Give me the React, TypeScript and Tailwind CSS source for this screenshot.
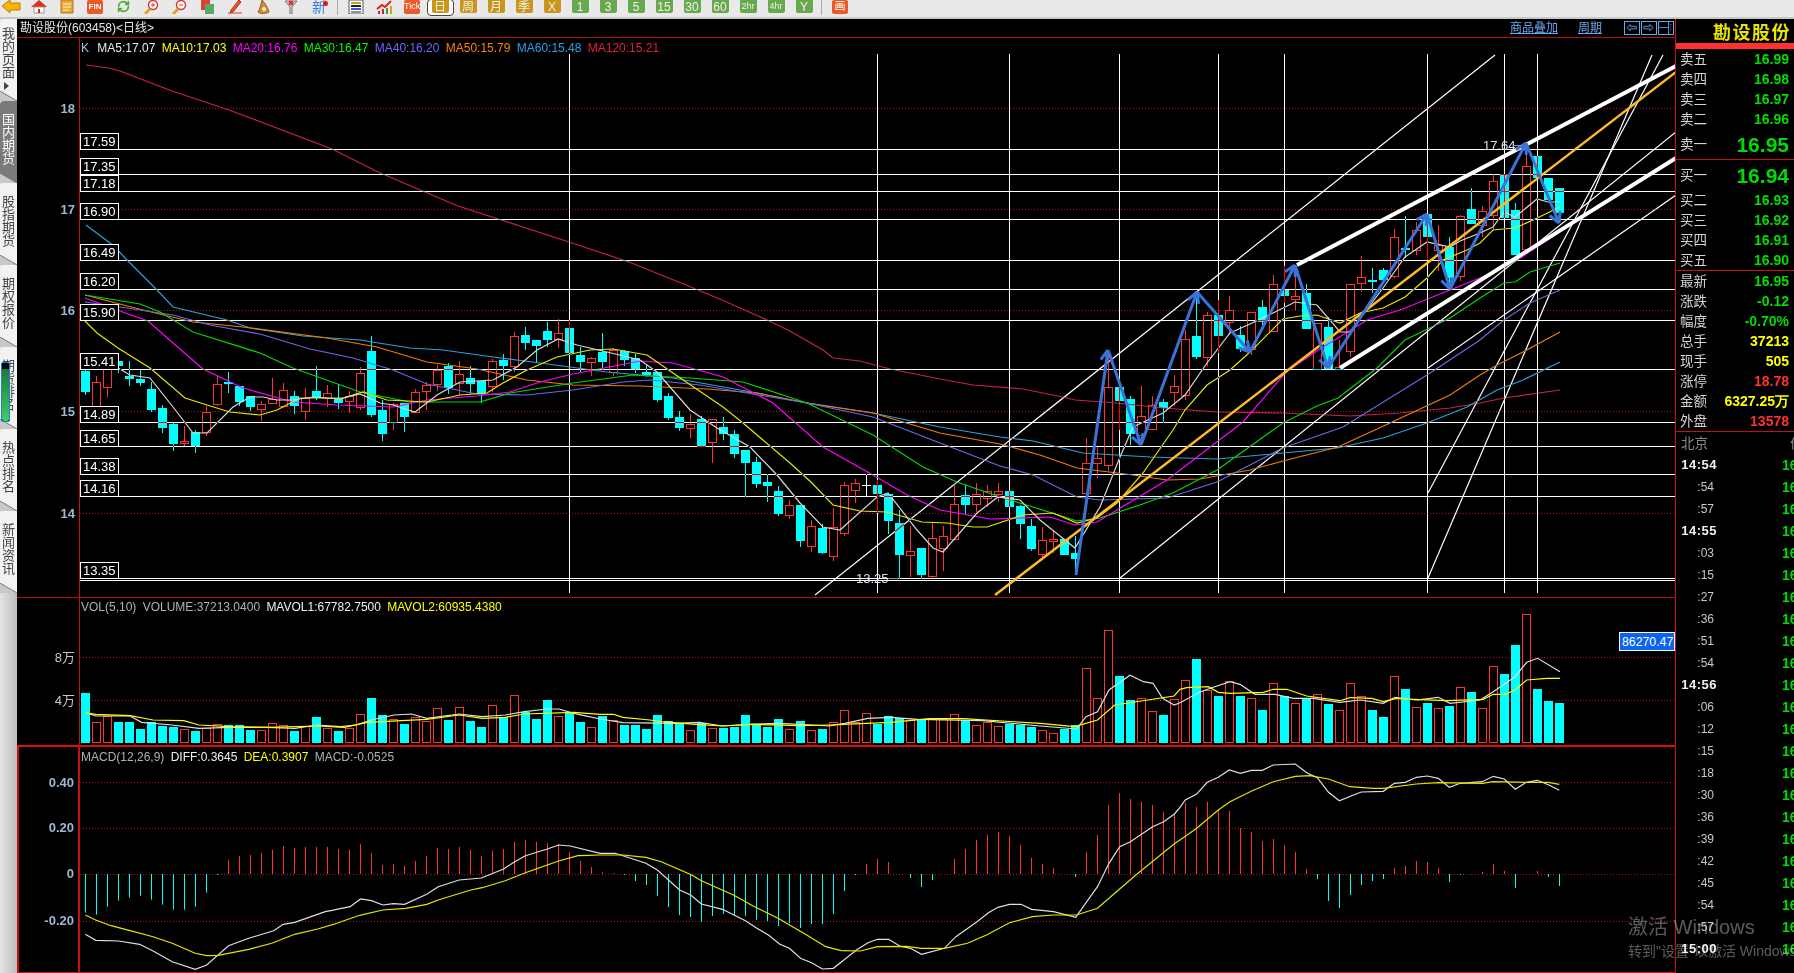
import type { ReactNode } from 'react'
import { RefreshCw } from 'lucide-react'

type Row = [string, number, number, number, number]

// Candle rows are [kind, bodyTop, bodyBottom, high, low] in thirds of a pixel from a section base
const lowerHalfA: Row[] = [
  ['c', 333, 396, 328, 404], ['r', 367, 437, 348, 437], ['r', 325, 380, 325, 410], ['c', 303, 318, 303, 338],
  ['c', 347, 357, 303, 378], ['c', 357, 369, 330, 378], ['c', 387, 450, 367, 455], ['c', 444, 504, 435, 519],
  ['c', 492, 552, 488, 573], ['r', 544, 550, 497, 557], ['c', 516, 558, 510, 579], ['r', 457, 515, 437, 527],
  ['r', 373, 431, 347, 437], ['c', 366, 371, 336, 400], ['c', 378, 426, 378, 438], ['c', 408, 441, 408, 453],
  ['r', 431, 448, 424, 483], ['r', 418, 430, 354, 430], ['r', 391, 439, 369, 443], ['c', 408, 437, 393, 461],
  ['r', 414, 454, 384, 480], ['c', 393, 414, 318, 420], ['r', 400, 413, 375, 440], ['c', 417, 429, 372, 447],
  ['r', 408, 422, 393, 459], ['r', 340, 442, 321, 450], ['c', 273, 465, 228, 470], ['c', 450, 521, 420, 543],
  ['r', 432, 487, 430, 510], ['c', 430, 470, 430, 516], ['r', 397, 457, 388, 457], ['r', 375, 394, 365, 450],
  ['r', 329, 371, 315, 392], ['c', 318, 385, 310, 402], ['r', 343, 369, 303, 405], ['c', 355, 371, 318, 402],
  ['c', 364, 403, 364, 428], ['r', 304, 379, 297, 396], ['c', 300, 318, 282, 360], ['r', 229, 317, 216, 336],
  ['c', 225, 249, 201, 270], ['c', 240, 258, 240, 306],
]

const lowerHalfB: Row[] = [
  ['c', 93, 120, 66, 140], ['r', 100, 118, 58, 145], ['c', 84, 159, 60, 160], ['c', 165, 186, 140, 218],
  ['r', 175, 185, 172, 228], ['c', 155, 186, 98, 210], ['r', 150, 215, 145, 228], ['c', 153, 179, 150, 198],
  ['c', 175, 207, 162, 220], ['c', 216, 224, 195, 232], ['c', 216, 300, 216, 306], ['c', 288, 354, 278, 360],
  ['c', 351, 384, 334, 393], ['r', 372, 384, 343, 414], ['c', 357, 440, 349, 440], ['r', 358, 425, 358, 489],
  ['c', 381, 402, 351, 420], ['c', 402, 462, 390, 474], ['c', 450, 489, 450, 590], ['c', 486, 552, 471, 564],
  ['c', 546, 558, 522, 606], ['c', 573, 642, 558, 648], ['r', 616, 644, 600, 657], ['c', 615, 723, 615, 741],
  ['r', 679, 738, 660, 756], ['c', 684, 759, 672, 762], ['r', 682, 767, 624, 783], ['r', 556, 698, 546, 708],
  ['r', 550, 569, 537, 609], ['w', 555, 555, 522, 588], ['c', 555, 582, 540, 640], ['c', 582, 663, 582, 702],
  ['c', 669, 765, 630, 836], ['r', 753, 765, 678, 831], ['c', 744, 825, 744, 836], ['r', 714, 828, 666, 834],
  ['r', 708, 744, 678, 813], ['r', 612, 717, 552, 720], ['c', 585, 615, 555, 642], ['r', 583, 613, 549, 636],
  ['r', 574, 594, 555, 621], ['r', 573, 582, 549, 606], ['c', 573, 621, 573, 621], ['c', 618, 672, 615, 717],
  ['c', 678, 747, 657, 753], ['r', 721, 762, 681, 777], ['r', 717, 722, 690, 760], ['c', 717, 765, 717, 765],
  ['c', 760, 777, 708, 825], ['r', 489, 578, 414, 578], ['r', 474, 490, 440, 534], ['r', 262, 496, 150, 513],
  ['c', 261, 303, 261, 390], ['c', 297, 402, 288, 435], ['r', 349, 405, 258, 435], ['r', 316, 386, 288, 386],
  ['c', 307, 325, 297, 369], ['r', 259, 275, 225, 318], ['r', 118, 285, 90, 300],
]

const upperRun: Row[] = [
  ['c', 918, 982, 800, 987], ['r', 856, 982, 846, 1008], ['c', 855, 918, 810, 970], ['r', 841, 876, 798, 915],
  ['c', 915, 957, 888, 965], ['r', 847, 957, 847, 975], ['c', 832, 877, 810, 900], ['r', 762, 902, 736, 902],
  ['c', 780, 797, 708, 818], ['r', 798, 806, 720, 840], ['c', 790, 897, 762, 897], ['r', 879, 1017, 879, 1017],
  ['c', 892, 1017, 862, 1017], ['r', 1010, 1017, 930, 1017], ['r', 763, 962, 763, 982], ['r', 742, 760, 678, 786],
  ['c', 750, 755, 714, 790], ['c', 720, 750, 714, 750], ['r', 622, 737, 597, 745], ['c', 655, 660, 558, 685],
  ['r', 601, 659, 575, 675], ['c', 552, 620, 552, 690], ['r', 646, 660, 585, 722], ['c', 650, 745, 622, 775],
  ['r', 559, 739, 555, 752], ['c', 537, 582, 474, 582], ['r', 544, 585, 528, 620], ['r', 454, 556, 432, 600],
]

const latest: Row[] = [
  ['c', 521, 654, 521, 654], ['c', 630, 765, 608, 765], ['r', 497, 748, 465, 750],
  ['c', 468, 535, 468, 535], ['c', 534, 600, 534, 600], ['c', 565, 640, 565, 640],
]

const fromBase = (base: number, rows: Row[]) =>
  rows.map(([kind, top, bottom, high, low]) => ({
    kind,
    top: Math.round(base + top / 3),
    bottom: Math.round(base + bottom / 3),
    high: Math.round(base + high / 3),
    low: Math.round(base + low / 3),
  }))

const candles = [
  ...fromBase(260, lowerHalfA),
  ...fromBase(300, lowerHalfB),
  ...fromBase(30, upperRun),
  ...fromBase(0, latest),
]

const slotX = (i: number) => 85.5 + 11 * i

const movingAverages = [
  { color: '#c8204c', points: '86,65 109,68 120,71 172,91 229,110 332,149 378,172 458,206 572,243 629,262 686,285 722,300 767,320 790,331 823,350 833,358 860,361 890,369 940,379 973,385 1023,389 1063,397 1075,400 1117,403 1163,408 1217,412 1283,413 1350,416 1400,413 1450,408 1480,403 1504,398 1560,390' },
  { color: '#2c9fd8', points: '86,225 114,246 127,260 157,290 173,307 227,320 250,328 303,336 360,340 410,348 443,350 493,357 540,363 607,372 673,378 757,393 807,403 873,413 940,427 1000,437 1033,441 1083,453 1150,457 1217,459 1283,453 1337,448 1383,438 1427,423 1467,407 1497,390 1523,380 1560,362' },
  { color: '#f07c00', points: '85,295 143,310 193,322 243,327 327,338 377,347 427,362 477,369 527,380 573,385 640,386 707,389 757,393 807,403 873,413 940,433 1000,444 1040,455 1077,468 1133,475 1167,480 1200,479 1250,470 1283,461 1338,447 1390,423 1450,395 1480,375 1497,365 1523,352 1560,332' },
  { color: '#6868e8', points: '85,302 127,308 173,315 210,325 260,334 310,349 353,358 393,370 427,384 477,394 527,395 573,390 623,382 650,380 700,385 747,393 807,403 873,417 940,443 1000,466 1033,475 1077,497 1100,500 1167,498 1217,482 1283,448 1343,427 1427,375 1480,340 1504,320 1530,303 1560,290' },
  { color: '#00d800', points: '85,295 140,304 160,312 193,332 260,353 293,368 360,392 410,402 480,402 510,393 573,383 633,375 690,378 743,382 807,403 873,435 923,467 957,482 1000,497 1033,507 1077,521 1100,518 1140,505 1173,493 1217,470 1283,423 1317,406 1338,398 1377,368 1405,340 1450,318 1480,298 1504,283 1515,282 1530,272 1560,263' },
  { color: '#ff00ff', points: '85,298 117,310 148,321 173,343 203,369 243,388 293,402 337,405 393,407 427,400 477,396 510,392 540,382 573,374 640,361 673,363 723,377 773,403 823,447 873,475 907,495 940,510 990,519 1050,517 1075,525 1097,522 1167,480 1243,422 1287,371 1320,349 1367,320 1400,310 1450,290 1480,278 1513,263 1540,245 1560,232' },
  { color: '#e6e600', points: '85,321 97,333 118,348 150,368 185,398 207,405 230,412 260,415 277,410 300,398 343,398 363,392 387,400 427,402 460,395 487,393 503,383 527,370 557,357 590,350 613,349 647,355 673,373 723,407 743,423 790,463 812,483 833,505 860,511 887,512 922,522 947,523 973,527 987,527 1023,515 1053,513 1077,523 1097,518 1117,503 1143,473 1173,430 1185,410 1207,385 1230,370 1250,352 1283,319 1300,316 1317,315 1340,323 1360,313 1383,308 1405,297 1427,278 1443,260 1467,250 1480,243 1493,230 1515,228 1533,220 1560,207' },
  { color: '#d8d8d8', points: '118,368 130,375 150,378 173,407 193,433 207,433 233,407 250,397 263,397 277,400 293,400 313,397 340,399 360,394 380,403 393,405 415,412 437,395 460,382 493,380 517,367 537,350 558,339 577,345 607,352 640,360 657,372 690,410 717,428 750,447 777,475 800,503 823,527 840,530 877,497 888,493 917,530 933,548 943,552 977,513 998,497 1020,500 1040,520 1075,548 1100,507 1120,457 1133,427 1163,413 1185,395 1207,363 1230,333 1250,324 1273,313 1295,302 1317,305 1340,332 1350,332 1383,288 1405,257 1427,242 1450,247 1460,241 1480,233 1493,227 1504,212 1515,217 1537,199 1548,202 1560,202' },
]

const fibLevels: [number, string][] = [
  [149, '17.59'], [174, '17.35'], [191, '17.18'], [219, '16.90'], [260, '16.49'], [289, '16.20'], [320, '15.90'],
  [369, '15.41'], [422, '14.89'], [446, '14.65'], [474, '14.38'], [496, '14.16'], [578, '13.35'],
]

const timeMarks = [44, 72, 84, 94, 103, 109, 122, 129, 132]

const thinLines = [
  [815, 595, 1495, 55], [1120, 578, 1676, 132], [1428, 368, 1676, 195],
  [1428, 578, 1652, 55], [1428, 493, 1663, 55],
]

const waves: [number, number][] = [
  [1076, 575], [1108, 350], [1141, 445], [1197, 292], [1250, 352], [1295, 265],
  [1328, 368], [1427, 214], [1450, 289], [1526, 143], [1559, 223],
]

// Shaft of every wave leg plus the two barbs of its head
const wavePath = waves.slice(1).map(([x, y], i) => {
  const [px, py] = waves[i]
  const angle = Math.atan2(py - y, px - x)
  const barb = (turn: number) =>
    `M${x + 12 * Math.cos(angle + turn)} ${y + 12 * Math.sin(angle + turn)}L${x} ${y}`
  return `M${px} ${py}L${x} ${y}${barb(0.5)}${barb(-0.5)}`
}).join('')

// Negative volume means a falling day, drawn solid
const volumes = [
  -309, 397, 377, -396, -396, -417, -397, -407, -411, 418, -423, 414, 403, -405, -405, -420, 421, 400, 406, -423,
  409, -381, 415, -423, 414, 373, -324, -375, 388, -402, 382, 394, 355, -390, 350, -393, -411, 346, -381, 316,
  -367, -387, -330, 378, -367, -396, 411, -378, 389, -405, -405, -417, -375, -393, -399, 420, -398, 414, -414, -411,
  -375, -402, -411, -387, 418, -393, 420, -417, 397, 361, 397, 370, -402, -378, -384, 390, -390, 387, 387, 373,
  -390, 406, 397, 409, -402, -405, -411, 420, 430, -418, -405, 235, 325, 121, -258, -330, 325, 364, -375, 328,
  271, -207, 300, -318, 274, -318, 325, -360, 280, -318, 340, -327, 313, -342, 361, 280, 319, -360, -381, 259,
  -297, 352, -339, 355, -348, 292, -306, 355, 229, -252, -165, 73, -297, -333, -339,
]

const macdBars = [
  968, 974, 950, 932, 923, 917, 929, 944, 959, 959, 950, 908, 855, 810, 798, 795, 789, 780, 768, 774,
  771, 771, 771, 777, 780, 762, 789, 825, 822, 828, 813, 798, 774, 777, 771, 780, 798, 783, 777, 756,
  750, 756, 759, 762, 786, 813, 831, 847, 849, 855, 873, 885, 918, 951, 975, 981, 996, 978, 972, 975,
  978, 990, 993, 1008, 1000, 1014, 1002, 1002, 972, 903, 855, 822, 807, 816, 853, 864, 891, 870, 852, 807,
  777, 750, 735, 726, 738, 765, 804, 822, 834, 852, 861, 786, 735, 645, 609, 627, 636, 645, 666, 672,
  639, 651, 636, 658, 663, 714, 726, 753, 747, 765, 786, 837, 867, 933, 954, 915, 885, 873, 867, 834,
  828, 813, 816, 834, 876, 855, 853, 846, 822, 843, 894, 852, 843, 861, 888,
]

type Pair = [number, number]

const toScreen = (origin: number, scale: number, pairs: Pair[]) =>
  pairs.map(([x, y]) => `${(origin + x / scale).toFixed(1)},${(590 + y / 3).toFixed(1)}`).join(' ')

const joinRuns = (a: Pair[], b: Pair[], c: Pair[]) =>
  [toScreen(0, 2.613, a), toScreen(600, 2.613, b), toScreen(1180, 3, c)].join(' ')

const mavol1 = joinRuns(
  [[223, 368], [250, 378], [340, 378], [370, 397], [450, 405], [520, 415], [600, 412], [700, 412], [770, 415], [830, 405], [890, 410], [930, 405], [970, 390], [1030, 375], [1075, 372], [1115, 385], [1200, 372], [1260, 380], [1320, 375], [1370, 365], [1430, 357], [1460, 357], [1500, 370]],
  [[0, 387], [60, 398], [200, 400], [260, 397], [320, 408], [400, 402], [470, 400], [600, 408], [640, 400], [700, 385], [760, 382], [830, 388], [1000, 392], [1150, 408], [1245, 417], [1270, 380], [1300, 365], [1330, 300], [1385, 256], [1420, 275], [1445, 280], [1470, 325], [1500, 345]],
  [[0, 338], [60, 306], [100, 292], [150, 275], [180, 283], [225, 313], [285, 313], [340, 325], [400, 325], [480, 337], [540, 330], [610, 340], [645, 322], [710, 330], [775, 322], [810, 340], [900, 330], [940, 305], [1005, 260], [1040, 217], [1073, 205], [1140, 245]],
)

const mavol2 = joinRuns(
  [[223, 368], [250, 373], [340, 377], [400, 390], [480, 392], [520, 405], [600, 410], [700, 412], [830, 408], [900, 412], [960, 397], [1050, 392], [1115, 388], [1200, 375], [1260, 385], [1320, 382], [1370, 372], [1500, 367]],
  [[0, 373], [35, 373], [60, 382], [130, 390], [160, 395], [250, 403], [320, 408], [400, 403], [520, 407], [600, 405], [760, 397], [860, 386], [950, 386], [1050, 393], [1150, 400], [1240, 410], [1300, 390], [1345, 345], [1500, 318]],
  [[0, 298], [20, 293], [85, 290], [115, 307], [150, 310], [250, 307], [280, 298], [320, 298], [380, 318], [480, 332], [510, 323], [575, 325], [610, 335], [650, 325], [700, 328], [800, 332], [910, 328], [940, 313], [975, 313], [1005, 300], [1040, 270], [1100, 265], [1140, 265]],
)

const diff = joinRuns(
  [[223, 1033], [250, 1051], [310, 1053], [365, 1063], [400, 1083], [450, 1115], [510, 1138], [540, 1125], [597, 1067], [650, 1045], [715, 1022], [740, 1003], [770, 997], [850, 965], [915, 950], [942, 927], [971, 932], [1000, 945], [1028, 941], [1057, 943], [1115, 913], [1145, 890], [1200, 870], [1258, 864], [1316, 837], [1345, 815], [1373, 797], [1430, 777], [1460, 765], [1490, 768]],
  [[0, 790], [40, 790], [120, 820], [150, 840], [208, 900], [237, 915], [265, 942], [320, 958], [380, 992], [410, 1015], [440, 1035], [470, 1063], [495, 1075], [524, 1105], [553, 1118], [581, 1137], [610, 1135], [670, 1080], [700, 1058], [725, 1048], [754, 1048], [783, 1068], [811, 1075], [840, 1093], [900, 1075], [930, 1040], [985, 995], [1015, 968], [1040, 952], [1070, 943], [1100, 943], [1128, 958], [1185, 965], [1243, 982], [1272, 935], [1300, 890], [1330, 820], [1358, 770], [1386, 755], [1444, 710], [1473, 695], [1501, 672]],
  [[0, 652], [16, 630], [49, 613], [82, 577], [115, 562], [148, 540], [181, 550], [214, 541], [247, 541], [280, 525], [346, 522], [380, 548], [412, 563], [445, 606], [478, 632], [544, 606], [610, 604], [643, 580], [676, 577], [709, 562], [742, 558], [775, 565], [808, 592], [841, 580], [907, 575], [940, 559], [973, 567], [1006, 598], [1039, 577], [1072, 571], [1105, 584], [1138, 601]],
)

const dea = joinRuns(
  [[223, 975], [250, 990], [290, 1007], [340, 1022], [400, 1040], [450, 1060], [510, 1090], [540, 1097], [570, 1096], [650, 1078], [710, 1060], [770, 1033], [830, 1017], [880, 1000], [940, 976], [1000, 960], [1060, 955], [1115, 943], [1145, 930], [1230, 900], [1260, 893], [1320, 872], [1373, 848], [1460, 813], [1510, 797]],
  [[0, 795], [60, 795], [120, 802], [160, 815], [240, 855], [265, 872], [350, 916], [400, 948], [465, 985], [540, 1035], [590, 1070], [630, 1082], [680, 1083], [725, 1070], [800, 1069], [840, 1075], [900, 1075], [960, 1060], [1010, 1035], [1070, 998], [1130, 980], [1185, 975], [1245, 975], [1300, 955], [1330, 925], [1400, 855], [1500, 762]],
  [[0, 750], [50, 715], [115, 660], [150, 635], [215, 603], [280, 575], [346, 559], [390, 557], [445, 567], [510, 590], [580, 595], [610, 595], [709, 582], [775, 578], [907, 580], [940, 575], [1040, 577], [1105, 577], [1138, 583]],
)

const dotted = (y: number) => (
  <line key={y} x1={80} x2={1675} y1={y} y2={y} stroke="#a81414" strokeDasharray="1 2" />
)

function AxisLabel({ y, text, plain }: { y: number; text: string; plain?: boolean }) {
  return (
    <span
      className={`absolute right-[4px] -translate-y-1/2 text-[13px] leading-none ${plain ? 'text-[#c8c8c8]' : 'font-bold text-[#9db8d0]'}`}
      style={{ top: y }}
    >
      {text}
    </span>
  )
}

function Panel({ top, height, className, axisClassName, legendClassName, plainAxis, axis, legend, children }: {
  top: number
  height: number
  className: string
  axisClassName: string
  legendClassName: string
  plainAxis?: boolean
  axis: { y: number; text: string }[]
  legend: ReactNode
  children: ReactNode
}) {
  return (
    <section className={`flex ${className}`}>
      <div className={`relative w-[63px] shrink-0 ${axisClassName}`}>
        {axis.map((a) => (
          <AxisLabel key={a.text} y={a.y - top} text={a.text} plain={plainAxis} />
        ))}
      </div>
      <div className="relative w-[1595px]">
        <svg viewBox={`80 ${top} 1595 ${height}`} className="block h-full w-full font-['Liberation_Sans']">
          {children}
        </svg>
        <div className={`absolute left-[1px] flex gap-[6.3px] text-[12px] leading-[14px] whitespace-nowrap ${legendClassName}`}>
          {legend}
        </div>
      </div>
    </section>
  )
}

function PriceChart() {
  return (
    <>
      {[108.5, 209.5, 310.5, 411.5, 513.5].map(dotted)}
      {candles.map((c, i) => {
        const x = slotX(i)
        if (c.kind === 'w') {
          return (
            <path key={i} d={`M${x} ${c.high}V${c.low}M${x - 4.5} ${c.top + 0.5}H${x + 4.5}`} stroke="#fff" />
          )
        }
        if (c.kind === 'c') {
          return (
            <g key={i}>
              <line x1={x} x2={x} y1={c.high} y2={c.low} stroke="#00ffff" />
              <rect x={x - 4.5} y={c.top} width={9} height={Math.max(c.bottom - c.top, 1)} fill="#00ffff" />
            </g>
          )
        }
        return (
          <g key={i}>
            <path d={`M${x} ${c.high}V${c.top}M${x} ${c.bottom}V${c.low}`} stroke="#ff3232" />
            <rect x={x - 4} y={c.top + 0.5} width={8} height={Math.max(c.bottom - c.top, 1)} fill="#000" stroke="#ff3232" />
          </g>
        )
      })}
      {movingAverages.map((m) => (
        <polyline key={m.color} points={m.points} fill="none" stroke={m.color} strokeWidth={1.2} />
      ))}
      {/* Drawing tools paint by inverting whatever lies under them */}
      <g className="mix-blend-difference" stroke="#fff">
        {fibLevels.map(([y]) => (
          <line key={y} x1={80} x2={1675} y1={y + 0.5} y2={y + 0.5} />
        ))}
        <line x1={80} x2={1675} y1={580.5} y2={580.5} />
        {timeMarks.map((i) => (
          <line key={i} x1={slotX(i)} x2={slotX(i)} y1={54} y2={593} />
        ))}
        {thinLines.map(([x1, y1, x2, y2]) => (
          <line key={x1 + y1} x1={x1} y1={y1} x2={x2} y2={y2} strokeWidth={1.2} />
        ))}
      </g>
      <line x1={995} y1={595} x2={1676} y2={72} stroke="#fdb92b" strokeWidth={2.5} />
      <line x1={1297} y1={265} x2={1676} y2={66} stroke="#fff" strokeWidth={4} />
      <line x1={1340} y1={368} x2={1676} y2={158} stroke="#fff" strokeWidth={4} />
      <path d={wavePath} fill="none" stroke="#3a72d8" strokeWidth={3} />
      <text x={1483} y={150} fontSize={13} fill="#d4e2f0">17.64</text>
      <line x1={1514} x2={1522} y1={145.5} y2={145.5} stroke="#999" />
      <text x={856} y={583} fontSize={13} fill="#d4e2f0">13.25</text>
      <line x1={888} x2={898} y1={578.5} y2={578.5} stroke="#999" />
      {fibLevels.map(([y, label]) => (
        <g key={label}>
          <rect x={80.5} y={y - 15.5} width={38} height={16} fill="#000" stroke="#fff" />
          <text x={83} y={y - 3} fontSize={13} fill="#fff">{label}</text>
        </g>
      ))}
    </>
  )
}

function VolumeChart() {
  return (
    <>
      {[657.5, 700.5].map(dotted)}
      {volumes.map((v, i) => {
        const top = Math.round(590 + Math.abs(v) / 3)
        const x = slotX(i)
        return v < 0 ? (
          <rect key={i} x={x - 4.5} y={top} width={9} height={743 - top} fill="#00ffff" />
        ) : (
          <rect key={i} x={x - 4} y={top + 0.5} width={8} height={742 - top} fill="#000" stroke="#ff3232" />
        )
      })}
      <polyline points={mavol1} fill="none" stroke="#e0e0e0" strokeWidth={1.2} />
      <polyline points={mavol2} fill="none" stroke="#ffff00" strokeWidth={1.2} />
      <rect x={1619.5} y={632.5} width={55} height={18} fill="#0a64f0" stroke="#fff" />
      <text x={1622} y={646} fontSize={12.3} fill="#fff">86270.47</text>
    </>
  )
}

function MacdChart() {
  return (
    <>
      {[782.5, 828.5, 874.5, 921.5].map(dotted)}
      {macdBars.map((v, i) => (
        <line
          key={i}
          x1={slotX(i)}
          x2={slotX(i)}
          y1={874}
          y2={590 + v / 3}
          stroke={v < 853 ? '#ff3232' : '#00ffff'}
        />
      ))}
      <polyline points={diff} fill="none" stroke="#e0e0e0" strokeWidth={1.2} />
      <polyline points={dea} fill="none" stroke="#e6e600" strokeWidth={1.2} />
    </>
  )
}

function GoldKey({ children, tone = 'gold' }: { children: ReactNode; tone?: 'gold' | 'green' }) {
  const fill = tone === 'gold' ? 'bg-[#c8961e]' : 'bg-[#68a850]'
  return (
    <div className={`-mt-[3px] flex h-[16px] w-[17px] items-center justify-center rounded-[2px] pt-[3px] text-[12px] leading-none text-[#f5f2df] ${fill}`}>
      {children}
    </div>
  )
}

function ToolCell({ children }: { children: ReactNode }) {
  return <div className="flex h-[17px] w-[28px] shrink-0 justify-center overflow-hidden">{children}</div>
}

function Glyph({ children }: { children: ReactNode }) {
  return (
    <svg viewBox="0 0 20 14" className="h-[14px] w-[20px]">
      {children}
    </svg>
  )
}

function Toolbar() {
  return (
    <header className="flex h-[19px] shrink-0 overflow-hidden border-b-2 border-[#c8c8c8] bg-[#e9e9e9] pr-[3px] font-['Liberation_Sans','Noto_Sans_CJK_SC',sans-serif]">
      <div className="-ml-[3px] flex">
        <ToolCell><Glyph><path d="M1 6 9 0v3h10v7H9v3z" fill="#f4b400" stroke="#c87800" /></Glyph></ToolCell>
        <ToolCell><Glyph><path d="M10 0 18 7H2z" fill="#d83020" /><path d="M5 7h10v6H5z" fill="#fff" stroke="#999" /><path d="M9 9h2v4H9z" fill="#c03020" /></Glyph></ToolCell>
        <ToolCell><Glyph><path d="M4 0h12v13H4z" fill="#e8a83a" stroke="#b07818" /><path d="M6 4h8M6 7h8M6 10h6" stroke="#fff3c8" /></Glyph></ToolCell>
        <ToolCell><div className="h-[14px] w-[16px] rounded-[2px] bg-[#e85a28] text-center text-[8px] leading-[13px] font-bold text-white">FIN</div></ToolCell>
        <ToolCell><RefreshCw className="h-[13px] w-[13px] text-[#4aa838]" strokeWidth={3} /></ToolCell>
        <ToolCell><Glyph><circle cx="12" cy="5" r="4.5" fill="#fff" stroke="#d83838" strokeWidth="1.5" /><path d="M9 9 4 14" stroke="#e8a020" strokeWidth="3" /><path d="M10 5h4M12 3v4" stroke="#d83838" /></Glyph></ToolCell>
        <ToolCell><Glyph><circle cx="12" cy="5" r="4.5" fill="#fff" stroke="#d83838" strokeWidth="1.5" /><path d="M9 9 4 14" stroke="#e8a020" strokeWidth="3" /><path d="M10 5h4" stroke="#d83838" /></Glyph></ToolCell>
        <ToolCell><Glyph><rect x="4" y="0" width="9" height="10" fill="#e04030" /><rect x="8" y="4" width="9" height="10" fill="#58a868" /></Glyph></ToolCell>
        <ToolCell><Glyph><path d="M14 0 6 10l-1 3 3-1 8-10z" fill="#e85030" stroke="#b83020" /><path d="M3 13h14" stroke="#d84020" /></Glyph></ToolCell>
        <ToolCell><Glyph><path d="M9 0c3 3 6 8 7 12-3 2-9 2-11 0 2-3 3-8 4-12z" fill="#d08a3a" stroke="#9a5a18" /><circle cx="11" cy="9" r="2" fill="#fff1c8" /></Glyph></ToolCell>
        <ToolCell><Glyph><path d="M4 1h12L11 7v7H9V7z" fill="#d8d8d8" stroke="#777" /><circle cx="10" cy="3" r="2.5" fill="#e03838" /></Glyph></ToolCell>
        <ToolCell><div className="relative text-[14px] leading-[15px] text-[#3a80d8]">新<span className="absolute top-[1px] -right-[2px] h-[5px] w-[5px] rounded-full bg-[#e81010]" /></div></ToolCell>
        <div className="w-[9px] shrink-0"><div className="ml-[4px] h-[15px] w-px bg-[#aaa]" /></div>
        <ToolCell><Glyph><rect x="3" y="0" width="14" height="14" fill="#fff" stroke="#555" /><path d="M5 3h10" stroke="#c8a020" strokeWidth="2" /><path d="M5 6h10" stroke="#222" strokeWidth="2" /><path d="M5 9h10" stroke="#3060c0" strokeWidth="2" /><path d="M5 12h10" stroke="#222" /></Glyph></ToolCell>
        <ToolCell><Glyph><path d="M3 9 8 5l3 2 6-6" fill="none" stroke="#e02020" strokeWidth="2" /><path d="M4 11h2v3H4zM8 9h2v5H8z" fill="#e02020" /><path d="M12 8h2v6h-2z" fill="#40a040" /><path d="M16 6h2v8h-2z" fill="#d8a020" /></Glyph></ToolCell>
        <ToolCell><div className="h-[14px] w-[16px] rounded-[2px] bg-[#e85a28] text-center text-[9px] leading-[13px] text-white">Tick</div></ToolCell>
        <ToolCell><div className="-mt-px flex h-[17px] w-[27px] items-start justify-center rounded-[4px] border border-[#444] bg-white"><GoldKey>日</GoldKey></div></ToolCell>
        {['周', '月', '季', 'X'].map((t) => (
          <ToolCell key={t}><GoldKey>{t}</GoldKey></ToolCell>
        ))}
        {['1', '3', '5', '15', '30', '60', '2hr', '4hr', 'Y'].map((t) => (
          <ToolCell key={t}><GoldKey tone="green"><span className={t.length === 3 ? 'text-[9px]' : ''}>{t}</span></GoldKey></ToolCell>
        ))}
        <div className="w-[8px] shrink-0"><div className="ml-[3px] h-[15px] w-px bg-[#aaa]" /></div>
        <ToolCell><div className="h-[14px] w-[16px] rounded-[2px] bg-[#e85a28] text-center text-[11px] leading-[13px] text-white">画</div></ToolCell>
      </div>
    </header>
  )
}

function SideTab({ label, active, marker, first }: { label: string; active?: boolean; marker?: boolean; first?: boolean }) {
  return (
    <div className={`relative h-[82px] shrink-0 overflow-hidden rounded-tl-[4px] ${first ? 'pt-[8px]' : 'pt-[12px]'} ${active ? 'bg-[#7a7a7a] text-white' : 'bg-[#f2f2f2] text-[#444]'}`}>
      <div className="pl-[2px] text-[13px] leading-[13px] [writing-mode:vertical-rl]">{label}</div>
      {marker && <div className="mt-[3px] ml-[4px] h-0 w-0 border-y-[4px] border-l-[5px] border-y-transparent border-l-[#444]" />}
      <svg viewBox="0 0 17 10" className="absolute bottom-0 left-0 h-[10px] w-[17px]">
        <path d="M0 0 17 10H0z" fill="#c8c8c8" />
        <path d="M0 0 17 10" stroke="#777" fill="none" />
      </svg>
    </div>
  )
}

function SideTabs() {
  return (
    <aside className="relative flex w-[17px] shrink-0 flex-col bg-linear-to-r from-[#e4e4e4] to-[#bcbcbc] font-['Noto_Sans_CJK_SC',sans-serif]">
      <SideTab label="我的页面" marker first />
      <SideTab label="国内期货" active />
      <SideTab label="股指期货" />
      <SideTab label="期权报价" />
      <SideTab label="期货排名" />
      <SideTab label="热点排名" />
      <SideTab label="新闻资讯" />
      {/* Green level meter sits over the fifth tab */}
      <div className="absolute top-[343px] left-[1px] flex h-[60px] w-[9px] flex-col rounded-[2px] border border-[#2080e0] bg-black">
        <div className="mt-[6px] flex-1 rounded-b-[2px] bg-linear-to-b from-[#1c7a38] to-[#40d060]" />
      </div>
    </aside>
  )
}

function QuoteRow({ label, value, tone = 'text-[#00dc00]', big }: {
  label: string
  value: string
  tone?: string
  big?: boolean
}) {
  return (
    <div className={`flex shrink-0 items-center justify-between pr-[5px] pl-[4px] ${big ? 'h-[30px]' : 'h-[20px]'}`}>
      <span className="font-['Noto_Sans_CJK_SC',sans-serif] text-[13.5px] leading-none text-[#d4d4d4]">{label}</span>
      <span className={`font-bold ${big ? 'text-[21px]' : 'text-[14px]'} leading-none ${tone}`}>{value}</span>
    </div>
  )
}

const ticks: [string, boolean][] = [
  ['14:54', true], [':54', false], [':57', false], ['14:55', true], [':03', false], [':15', false], [':27', false],
  [':36', false], [':51', false], [':54', false], ['14:56', true], [':06', false], [':12', false], [':15', false],
  [':18', false], [':30', false], [':36', false], [':39', false], [':42', false], [':45', false], [':54', false],
  [':57', false], ['15:00', true],
]

function QuotePanel() {
  return (
    <aside className="flex w-[118px] shrink-0 flex-col overflow-hidden font-['Liberation_Sans',sans-serif]">
      <div className="h-[24px] shrink-0 pr-[3px] text-right font-['Noto_Sans_CJK_SC',serif] text-[18px] leading-[25px] font-bold tracking-[1.5px] text-[#e6e600]">
        勘设股份
      </div>
      <div className="h-[6px] shrink-0 bg-[#ff3030]" />
      <QuoteRow label="卖五" value="16.99" />
      <QuoteRow label="卖四" value="16.98" />
      <QuoteRow label="卖三" value="16.97" />
      <QuoteRow label="卖二" value="16.96" />
      <QuoteRow label="卖一" value="16.95" big />
      <div className="h-px shrink-0 bg-[#c81010]" />
      <QuoteRow label="买一" value="16.94" big />
      <QuoteRow label="买二" value="16.93" />
      <QuoteRow label="买三" value="16.92" />
      <QuoteRow label="买四" value="16.91" />
      <QuoteRow label="买五" value="16.90" />
      <div className="h-px shrink-0 bg-[#c81010]" />
      <QuoteRow label="最新" value="16.95" />
      <QuoteRow label="涨跌" value="-0.12" />
      <QuoteRow label="幅度" value="-0.70%" />
      <QuoteRow label="总手" value="37213" tone="text-[#ffff00]" />
      <QuoteRow label="现手" value="505" tone="text-[#ffff00]" />
      <QuoteRow label="涨停" value="18.78" tone="text-[#ff3232]" />
      <QuoteRow label="金额" value="6327.25万" tone="text-[#ffff00]" />
      <QuoteRow label="外盘" value="13578" tone="text-[#ff3232]" />
      <div className="h-px shrink-0 bg-[#c81010]" />
      <div className="flex h-[22px] shrink-0 items-center whitespace-nowrap font-['Noto_Sans_CJK_SC',sans-serif] text-[13.5px] leading-none text-[#8a8a8a]">
        <span className="w-[114px] shrink-0 pl-[5px]">北京</span>
        <span>价</span>
      </div>
      {ticks.map(([time, major], i) => (
        <div key={i} className="flex h-[22px] shrink-0 items-center whitespace-nowrap">
          <span className={`w-[41px] shrink-0 text-right ${major ? 'text-[13px] font-bold tracking-[0.5px] text-[#f0f0f0]' : 'pr-[3px] text-[12px] text-[#c8c8c8]'}`}>
            {time}
          </span>
          <span className="ml-[65px] shrink-0 text-[14px] font-bold text-[#00dc00]">16.94</span>
        </div>
      ))}
    </aside>
  )
}

export default function App() {
  return (
    <div className="relative flex h-[973px] w-[1794px] flex-col overflow-hidden bg-black font-['Liberation_Sans','Noto_Sans_CJK_SC',sans-serif] text-white">
      <Toolbar />
      <div className="flex min-h-0 flex-1">
        <SideTabs />
        <main className="flex w-[1659px] shrink-0 flex-col border-r border-[#c81010]">
          <div className="flex h-[19px] shrink-0 items-center justify-between border-b border-[#b01010] pr-[1px] pl-[3px] text-[12px] leading-none">
            <span className="text-[#e8e8e8]">勘设股份(603458)&lt;日线&gt;</span>
            <div className="flex items-center text-[#68a8f0]">
              <span className="underline underline-offset-1">商品叠加</span>
              <span className="ml-[20px] underline underline-offset-1">周期</span>
              <div className="ml-[22px] flex gap-px">
                <svg viewBox="0 0 16 14" className="h-[14px] w-[16px] border border-[#68a8f0]"><path d="M2 6.5 6 3v2h7v3H6v2z" fill="none" stroke="#68a8f0" /></svg>
                <svg viewBox="0 0 16 14" className="h-[14px] w-[16px] border border-[#68a8f0]"><path d="M13 6.5 9 3v2H2v3h7v2z" fill="none" stroke="#68a8f0" /></svg>
                <svg viewBox="0 0 16 14" className="h-[14px] w-[16px] border border-[#68a8f0]"><path d="M0 6.5h11M11 0v14M13 3h1M13 6h1M13 9h1" stroke="#68a8f0" fill="none" /></svg>
              </div>
            </div>
          </div>
          <Panel
            top={38}
            height={559}
            className="h-[560px] shrink-0 border-b border-[#b01010]"
            axisClassName="border-r border-[#c81010]"
            legendClassName="top-[3px]"
            axis={[{ y: 108, text: '18' }, { y: 209, text: '17' }, { y: 310, text: '16' }, { y: 411, text: '15' }, { y: 513, text: '14' }]}
            legend={
              <>
                <span className="mr-[2px] text-[#9cc8e8]">K</span>
                <span className="text-[#e8e8e8]">MA5:17.07</span>
                <span className="text-[#ffff00]">MA10:17.03</span>
                <span className="text-[#ff00ff]">MA20:16.76</span>
                <span className="text-[#00ff00]">MA30:16.47</span>
                <span className="text-[#6868ff]">MA40:16.20</span>
                <span className="text-[#ff8000]">MA50:15.79</span>
                <span className="text-[#2c9fe8]">MA60:15.48</span>
                <span className="text-[#e02040]">MA120:15.21</span>
              </>
            }
          >
            <PriceChart />
          </Panel>
          <Panel
            top={598}
            height={147}
            className="h-[149px] shrink-0 border-b-2 border-[#d81010]"
            axisClassName="border-r border-[#c81010]"
            legendClassName="top-[2px]"
            plainAxis
            axis={[{ y: 657, text: '8万' }, { y: 700, text: '4万' }]}
            legend={
              <>
                <span className="text-[#b0b0b0]">VOL(5,10)</span>
                <span className="text-[#b0b0b0]">VOLUME:37213.0400</span>
                <span className="text-[#f0f0f0]">MAVOL1:67782.7500</span>
                <span className="text-[#ffff00]">MAVOL2:60935.4380</span>
              </>
            }
          >
            <VolumeChart />
          </Panel>
          <Panel
            top={747}
            height={225}
            className="h-[226px] shrink-0 border-b border-[#d81010]"
            axisClassName="border-x-2 border-[#c81010]"
            legendClassName="top-[3px]"
            axis={[{ y: 782, text: '0.40' }, { y: 827, text: '0.20' }, { y: 873, text: '0' }, { y: 920, text: '-0.20' }]}
            legend={
              <>
                <span className="text-[#b0b0b0]">MACD(12,26,9)</span>
                <span className="text-[#f0f0f0]">DIFF:0.3645</span>
                <span className="text-[#ffff00]">DEA:0.3907</span>
                <span className="text-[#b0b0b0]">MACD:-0.0525</span>
              </>
            }
          >
            <MacdChart />
          </Panel>
        </main>
        <QuotePanel />
      </div>
      <div className="pointer-events-none absolute top-[913px] left-[1628px] whitespace-nowrap font-['Liberation_Sans','Noto_Sans_CJK_SC',sans-serif] text-white/35">
        <div className="text-[20px] leading-[28px]">激活 Windows</div>
        <div className="text-[14px] leading-[20px]">转到"设置"以激活 Windows。</div>
      </div>
    </div>
  )
}
